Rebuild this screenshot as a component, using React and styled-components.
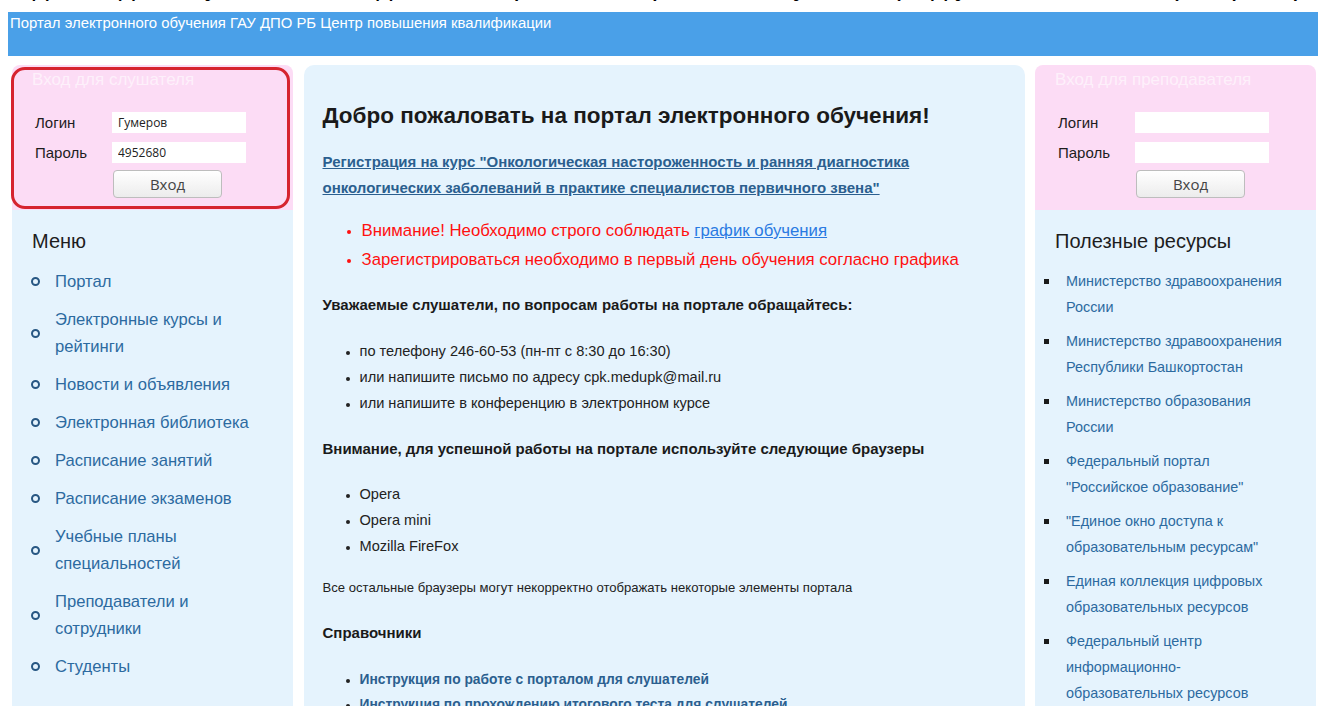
import styled, { createGlobalStyle } from "styled-components";

const GlobalStyle = createGlobalStyle`
  body {
    margin: 0 0 0 8px;
    background: #ffffff;
    font-family: "Liberation Sans", Arial, sans-serif;
    color: #222;
    overflow: hidden;
  }
`;

const menuItems = [
  "Портал",
  "Электронные курсы и рейтинги",
  "Новости и объявления",
  "Электронная библиотека",
  "Расписание занятий",
  "Расписание экзаменов",
  "Учебные планы специальностей",
  "Преподаватели и сотрудники",
  "Студенты",
];

const resources = [
  "Министерство здравоохранения России",
  "Министерство здравоохранения Республики Башкортостан",
  "Министерство образования России",
  'Федеральный портал "Российское образование"',
  '"Единое окно доступа к образовательным ресурсам"',
  "Единая коллекция цифровых образовательных ресурсов",
  "Федеральный центр информационно-образовательных ресурсов",
];

const contacts = [
  "по телефону 246-60-53 (пн-пт с 8:30 до 16:30)",
  "или напишите письмо по адресу cpk.medupk@mail.ru",
  "или напишите в конференцию в электронном курсе",
];

const browsers = ["Opera", "Opera mini", "Mozilla FireFox"];

const manuals = [
  "Инструкция по работе с порталом для слушателей",
  "Инструкция по прохождению итогового теста для слушателей",
];

const LoginForm = ({ title, login, password, marked }) => (
  <LoginBox $marked={marked}>
    <LoginTitle>{title}</LoginTitle>
    <FormRow>
      <FormLabel>Логин</FormLabel>
      <FormInput defaultValue={login} />
    </FormRow>
    <FormRow>
      <FormLabel>Пароль</FormLabel>
      <FormInput defaultValue={password} />
    </FormRow>
    <FormRow>
      <FormLabel />
      <LoginButton>Вход</LoginButton>
    </FormRow>
  </LoginBox>
);

export default function App() {
  return (
    <>
      <GlobalStyle />
      <Caption>
        <CaptionText>
          Задание для слушателя: войдите на портал электронного обучения (под учётной записью) и проверьте доступ к курсу
        </CaptionText>
      </Caption>
      <Header>Портал электронного обучения ГАУ ДПО РБ Центр повышения квалификации</Header>
      <Columns>
        <SideColumn>
          <LoginForm title="Вход для слушателя" login="Гумеров" password="4952680" marked />
          <SidePanel>
            <PanelTitle>Меню</PanelTitle>
            <MenuList>
              {menuItems.map((item) => (
                <MenuItem key={item}>
                  <Ring />
                  <MenuLink>{item}</MenuLink>
                </MenuItem>
              ))}
            </MenuList>
          </SidePanel>
        </SideColumn>

        <MainPanel>
          <Title>Добро пожаловать на портал электронного обучения!</Title>
          <CourseLink>
            Регистрация на курс "Онкологическая настороженность и ранняя диагностика
            онкологических заболеваний в практике специалистов первичного звена"
          </CourseLink>
          <WarningList>
            <li>
              Внимание! Необходимо строго соблюдать <ScheduleLink>график обучения</ScheduleLink>
            </li>
            <li>Зарегистрироваться необходимо в первый день обучения согласно графика</li>
          </WarningList>

          <Heading $top={21}>Уважаемые слушатели, по вопросам работы на портале обращайтесь:</Heading>
          <DotList $top={23}>
            {contacts.map((c) => (
              <li key={c}>{c}</li>
            ))}
          </DotList>

          <Heading $top={23}>Внимание, для успешной работы на портале используйте следующие браузеры</Heading>
          <DotList $top={22}>
            {browsers.map((b) => (
              <li key={b}>{b}</li>
            ))}
          </DotList>

          <Note>Все остальные браузеры могут некорректно отображать некоторые элементы портала</Note>

          <Heading $top={25}>Справочники</Heading>
          <ManualList>
            {manuals.map((m) => (
              <li key={m}>
                <ManualLink>{m}</ManualLink>
              </li>
            ))}
          </ManualList>
        </MainPanel>

        <SideColumn>
          <LoginForm title="Вход для преподавателя" login="" password="" />
          <SidePanel>
            <PanelTitle>Полезные ресурсы</PanelTitle>
            <ResourceList>
              {resources.map((r) => (
                <ResourceItem key={r}>
                  <Square />
                  <ResourceLink>{r}</ResourceLink>
                </ResourceItem>
              ))}
            </ResourceList>
          </SidePanel>
        </SideColumn>
      </Columns>
    </>
  );
}

const Caption = styled.div`
  height: 12px;
  overflow: hidden;
  margin-left: -8px;
`;

const CaptionText = styled.div`
  font-size: 28px;
  line-height: 28px;
  margin-top: -28px;
  white-space: nowrap;
  color: #000;
`;

const Header = styled.div`
  height: 44px;
  background: #4aa0e8;
  color: #fff;
  font-size: 14.9px;
  padding: 3px 2px 0;
  box-sizing: border-box;
`;

const Columns = styled.div`
  display: grid;
  grid-template-columns: 281px 721px 281px;
  column-gap: 10.5px;
  margin: 9px 0 0 4px;
  height: 660px;
`;

const SideColumn = styled.div`
  display: flex;
  flex-direction: column;
`;

const LoginBox = styled.div`
  position: relative;
  height: 145px;
  box-sizing: border-box;
  background: #fcdcf5;
  border-radius: 8px 8px 0 0;
  padding: 4px 0 0 20px;

  ${({ $marked }) =>
    $marked &&
    `
    &::after {
      content: "";
      position: absolute;
      left: -1px;
      top: 2px;
      right: 3px;
      bottom: 1px;
      border: 3px solid #d6242f;
      border-radius: 14px;
      pointer-events: none;
    }
  `}
`;

const LoginTitle = styled.div`
  font-size: 17px;
  line-height: 22px;
  color: rgba(255, 255, 255, 0.6);
  margin-bottom: 21px;
`;

const FormRow = styled.div`
  display: flex;
  align-items: center;
  margin-bottom: 9px;
  padding-left: 3px;

  &:last-child {
    margin-top: -2px;
  }
`;

const FormLabel = styled.span`
  width: 77px;
  font-size: 15px;
  color: #1d1d1d;
`;

const FormInput = styled.input`
  width: 134px;
  height: 21px;
  box-sizing: border-box;
  border: none;
  outline: none;
  background: #fff;
  padding: 0 6px;
  font-family: "Open Sans", "Liberation Sans", sans-serif;
  font-size: 12px;
  color: #222;
`;

const LoginButton = styled.button`
  width: 109px;
  height: 28px;
  margin-left: 1px;
  border: 1px solid #bdbdbd;
  border-radius: 4px;
  background: linear-gradient(#ffffff, #ececec);
  font-family: "Open Sans", "Liberation Sans", sans-serif;
  font-size: 15px;
  color: #444;
  cursor: pointer;
`;

const SidePanel = styled.div`
  flex: 1;
  background: #e5f3fd;
  padding: 20px 12px 0 20px;
`;

const PanelTitle = styled.div`
  font-size: 20px;
  line-height: 22px;
  color: #1d1d1d;
  margin-bottom: 16px;
`;

const MenuList = styled.ul`
  list-style: none;
  margin: 0;
  padding: 0;
`;

const MenuItem = styled.li`
  display: flex;
  align-items: center;
  gap: 15px;
  margin-bottom: 11px;
`;

const Ring = styled.span`
  flex: none;
  width: 5px;
  height: 5px;
  margin-left: -1px;
  border: 2px solid #285783;
  border-radius: 50%;
`;

const MenuLink = styled.a`
  max-width: 205px;
  font-size: 16.6px;
  line-height: 27px;
  color: #2c6aa0;
  cursor: pointer;
`;

const MainPanel = styled.div`
  background: #e5f3fd;
  border-radius: 10px 10px 0 0;
  padding: 36px 19px 0;
`;

const Title = styled.h1`
  margin: 0 0 18px;
  font-size: 22.5px;
  line-height: 30px;
  font-weight: bold;
  color: #1a1a1a;
`;

const CourseLink = styled.a`
  display: block;
  width: 640px;
  font-size: 15px;
  line-height: 26px;
  font-weight: bold;
  color: #2b5f8f;
  text-decoration: underline;
  cursor: pointer;
`;

const WarningList = styled.ul`
  margin: 15px 0 0;
  padding-left: 39px;
  color: #ff1010;
  font-size: 16.8px;
  line-height: 29px;

  li::marker {
    font-size: 14px;
  }
`;

const ScheduleLink = styled.a`
  color: #2a7ae2;
  text-decoration: underline;
  cursor: pointer;
`;

const Heading = styled.div`
  margin-top: ${({ $top }) => $top}px;
  font-size: 15px;
  line-height: 20px;
  font-weight: bold;
  color: #1a1a1a;
`;

const DotList = styled.ul`
  margin: ${({ $top }) => $top}px 0 0;
  padding-left: 37px;
  font-size: 14.6px;
  line-height: 26px;
  color: #222;

  li::marker {
    font-size: 12px;
  }
`;

const Note = styled.div`
  margin-top: 19px;
  font-size: 13.1px;
  line-height: 20px;
  color: #222;
`;

const ManualList = styled.ul`
  margin: 24px 0 0;
  padding-left: 37px;
  font-size: 13.8px;
  line-height: 25px;

  li::marker {
    font-size: 12px;
    color: #222;
  }
`;

const ManualLink = styled.a`
  font-weight: bold;
  color: #2b5f8f;
  cursor: pointer;
`;

const ResourceList = styled.ul`
  list-style: none;
  margin: 12px 0 0;
  padding: 0;
`;

const ResourceItem = styled.li`
  display: flex;
  align-items: flex-start;
  gap: 17px;
  margin: 0 0 8px -11px;
`;

const Square = styled.span`
  flex: none;
  width: 5px;
  height: 5px;
  margin-top: 11px;
  background: #1a1a1a;
`;

const ResourceLink = styled.a`
  max-width: 224px;
  font-size: 14.4px;
  line-height: 26px;
  color: #2c6aa0;
  cursor: pointer;
`;
